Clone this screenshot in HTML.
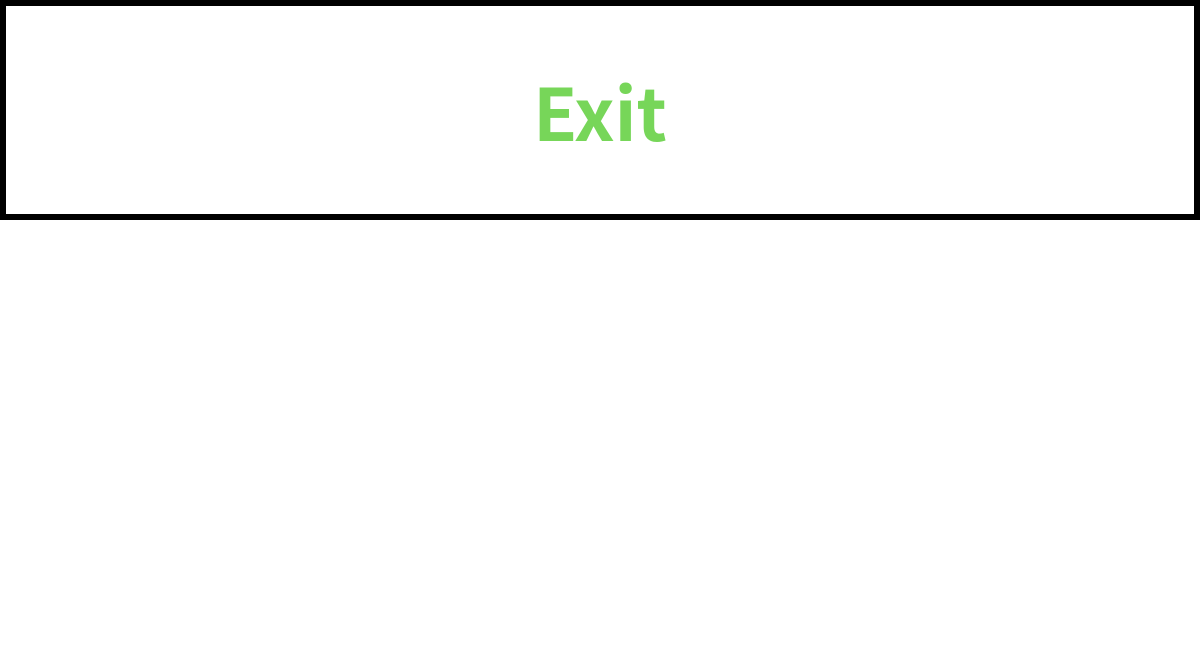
<!DOCTYPE html>
<html><head><style>
html,body{margin:0;padding:0;background:#fff;width:1200px;height:650px;overflow:hidden}
.box{position:absolute;left:0;top:0;width:1188px;height:208px;border:6px solid #000;background:#fff}
.t{position:absolute;left:0;width:1200px;top:62px;text-align:center;font-family:"Noto Sans CJK SC","Liberation Sans",sans-serif;font-weight:bold;font-size:72px;line-height:96px;color:#77d659}
</style></head><body>
<div class="box"></div>
<div class="t">Exit</div>
</body></html>
